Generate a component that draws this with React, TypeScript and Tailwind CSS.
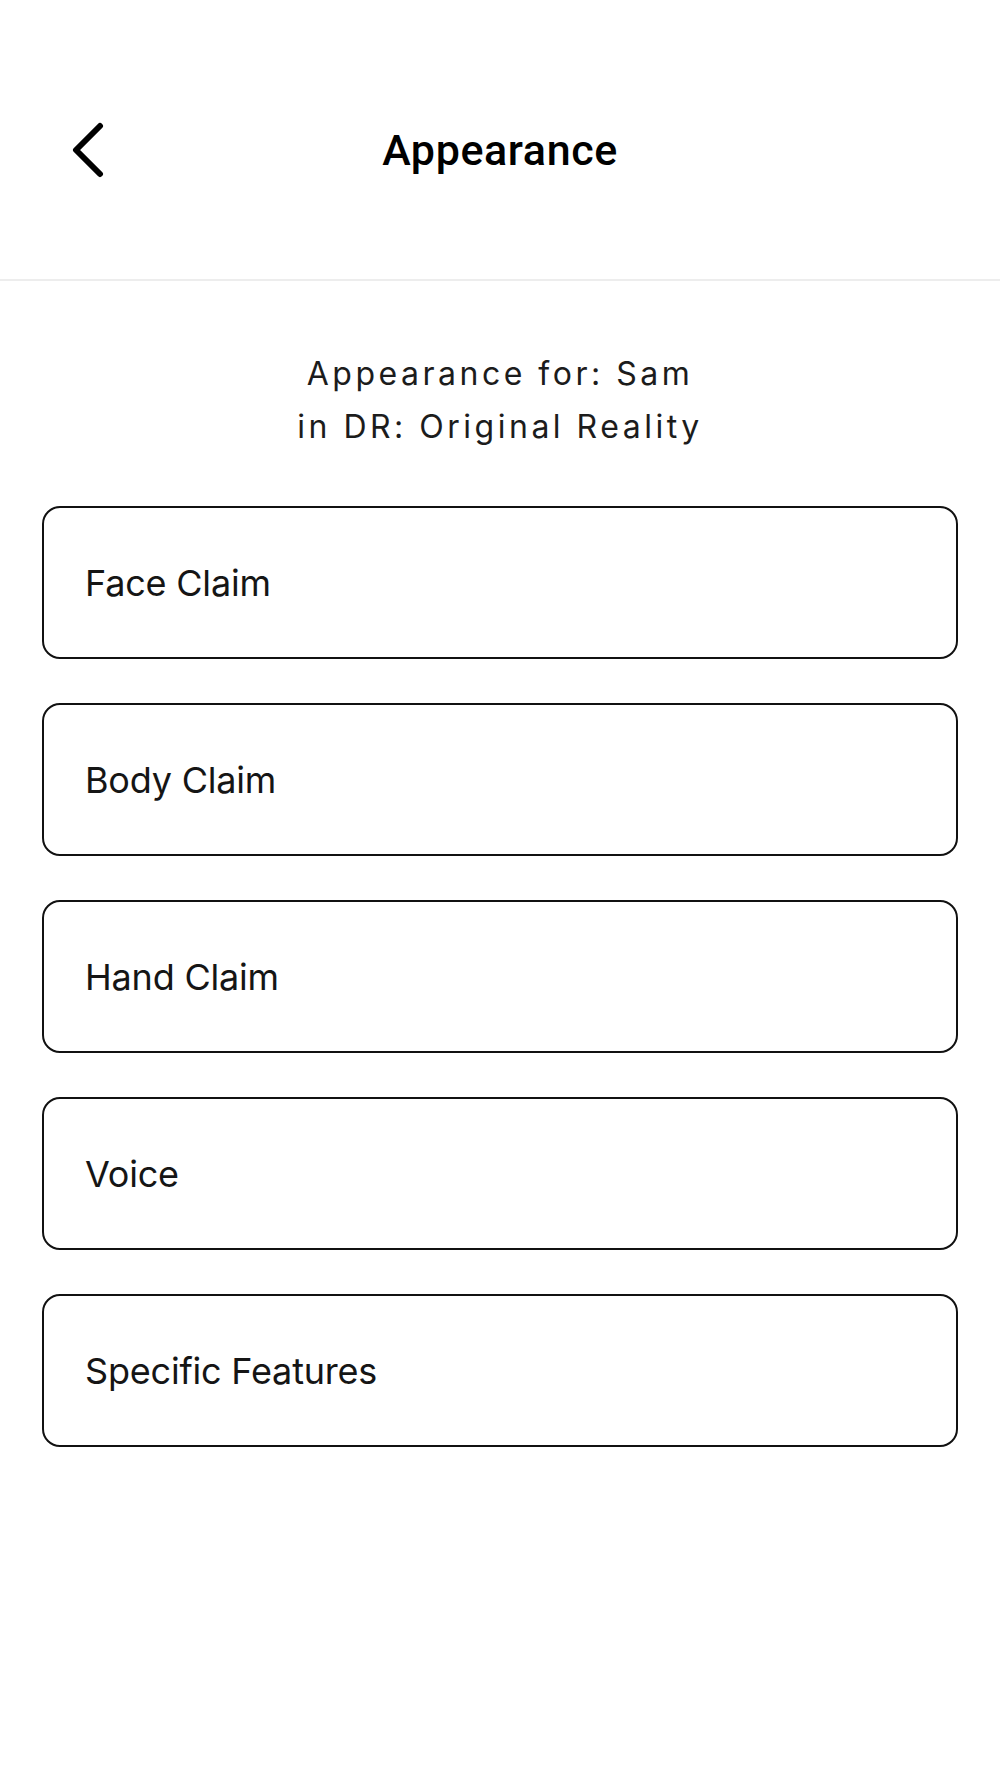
const items = ["Face Claim", "Body Claim", "Hand Claim", "Voice", "Specific Features"]

export default function App() {
  return (
    <div className="w-[1000px] min-h-[1778px] bg-white text-[#111]">
      <header className="h-[281px] border-b-2 border-[#ededed] pt-[122px]">
        <div className="relative flex h-[56px] items-center justify-center">
          <button className="absolute left-[70px] top-0 h-[56px] w-[34px]">
            <svg viewBox="0 0 34 56" className="h-[56px] w-[34px]" fill="none" stroke="#000" strokeWidth="6" strokeLinecap="round" strokeLinejoin="round">
              <path d="M30 4 L6 28 L30 52" />
            </svg>
          </button>
          <h1 className="font-['Roboto',sans-serif] text-[43px] font-medium tracking-[0.6px] text-black">Appearance</h1>
        </div>
      </header>

      <div className="mt-[66px] text-center font-['Inter',sans-serif] text-[32px] leading-[53px] tracking-[3.5px] text-[#1c1c1c]">
        <p>Appearance for: Sam</p>
        <p>in DR: Original Reality</p>
      </div>

      <div className="mx-[42px] mt-[53px] flex flex-col gap-[44px]">
        {items.map((t) => (
          <div key={t} className="flex h-[153px] items-center rounded-[18px] border-2 border-[#111] pl-[41px]">
            <span className="font-['Inter',sans-serif] text-[36px] tracking-[-0.2px] text-[#151515]">{t}</span>
          </div>
        ))}
      </div>
    </div>
  )
}
